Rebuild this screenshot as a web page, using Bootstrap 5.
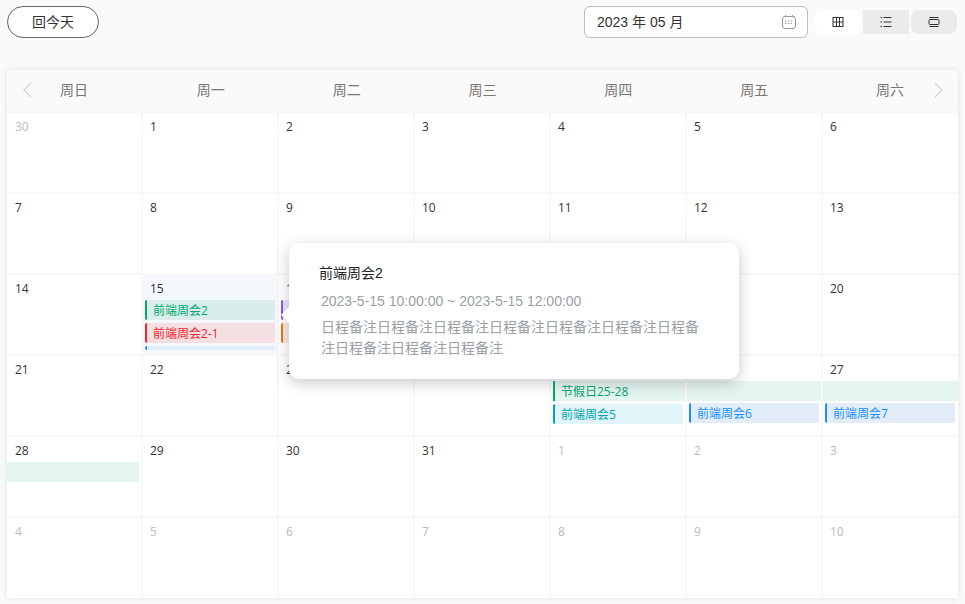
<!DOCTYPE html>
<html lang="zh">

<head>
    <meta charset="UTF-8">
    <title>日程</title>
    <link href="https://cdn.jsdelivr.net/npm/bootstrap@5.3.0/dist/css/bootstrap.min.css" rel="stylesheet" />
    <script src="https://cdn.jsdelivr.net/npm/bootstrap@5.3.0/dist/js/bootstrap.bundle.min.js"></script>
    <style>
        html, body { height: 604px; overflow: hidden; }
        body { background: #fafafa; font-family: "Liberation Sans", "Noto Sans CJK SC", sans-serif; font-size: 14px; color: #333; }
        .page-wrap { padding: 6px 7px 0; position: relative; }
        .tool-row { height: 32px; margin-bottom: 32px; }
        .today-btn { width: 92px; height: 32px; border: 1px solid #666; border-radius: 16px; background: #fff; color: #333; font-size: 14px; line-height: 1; padding: 0; }
        .month-box { width: 224px; height: 32px; margin-right: 7px; padding: 0 11px 0 12px; background: #fff; border: 1px solid #bbb; border-radius: 6px; font-size: 14px; color: #333; }
        .view-btns { gap: 2px; margin-top: 4px; margin-right: 1px; }
        .view-btn { width: 46px; height: 24px; background: #ebebeb; color: #333; }
        .view-btn.on { background: #fff; border-radius: 8px; }
        .view-btn.end { border-radius: 8px; }
        .cal-box { width: 951px; height: 528px; background: #fff; box-shadow: 0 0 6px rgba(0,0,0,.1); display: flex; flex-direction: column; }
        .week-head { height: 41px; flex: none; background: #fafafa; position: relative; color: #777; }
        .week-name { width: 136px; text-align: center; padding-top: 12px; line-height: 17px; }
        .week-name.first { padding-right: 2px; }
        .nav-arrow { position: absolute; top: 11px; }
        .week-row { height: 81px; flex: none; border-top: 2px solid #f7f7f7; }
        .week-row.last { height: auto; flex: 1; }
        .day-cell { width: 136px; border-right: 2px solid #f8f8f8; padding: 0 2px; position: relative; }
        .day-cell.end { width: 135px; border-right: 0; padding-right: 3px; }
        .day-cell.picked { background: #f4f8fc; }
        .day-num { display: block; padding: 5px 0 0 5px; height: 25px; line-height: 17px; font-size: 12px; color: #333; font-family: "Open Sans", "Noto Sans CJK SC", sans-serif; }
        .day-cell.first .day-num { padding-left: 6px; }
        .day-cell.other .day-num { color: #bbb; }
        .ev-bar { height: 20px; margin-bottom: 3px; padding-left: 6px; border-left: 2px solid; border-radius: 2px; font-family: "Open Sans", "Noto Sans CJK SC", sans-serif; font-size: 12px; line-height: 22px; white-space: nowrap; overflow: hidden; }
        .ev-green { color: #00a870; border-color: #00a870; background: #d9eeea; }
        .ev-red { color: #f5222d; border-color: #f5222d; background: #f5dfe3; }
        .ev-blue { color: #1890ff; border-color: #1890ff; background: #e3edfa; }
        .ev-cyan { color: #00a3b4; border-color: #00a3b4; background: #e1f4f8; }
        .ev-purple { border-color: #7a5cf5; background: #e7e3fa; color: #7a5cf5; }
        .ev-orange { border-color: #f5700a; background: #f8e8dc; color: #f5700a; }
        .ev-cut { height: 4px; margin-bottom: 0; }
        .holiday-head { color: #00a870; border-color: #00a870; background: #e4f4ee; border-radius: 0; margin-right: -2px; }
        .holiday-tail { border: 0; border-radius: 0; background: #e4f4ee; margin-left: -2px; margin-right: -2px; margin-bottom: 2px; }
        .day-cell.end .holiday-tail { margin-right: -3px; }
        .day-cell.first .holiday-tail { margin-right: 0; }
        .info-pop { position: absolute; left: 289px; top: 243px; width: 450px; height: 136px; background: #fff; border-radius: 10px; box-shadow: 0 4px 14px rgba(60,60,90,.28); padding: 22px 30px 0 31px; z-index: 5; }
        .info-pop::before { content: ""; position: absolute; left: -8px; top: 64px; border: 8px solid transparent; border-left: 0; border-right-color: #fff; }
        .info-title { font-size: 14px; color: #222; line-height: 17px; margin-left: -1px; }
        .info-time { font-size: 14px; color: #9a9fa6; line-height: 17px; margin-top: 11px; margin-left: 1px; }
        .info-note { font-size: 14px; color: #9a9fa6; line-height: 21px; margin-top: 7px; margin-left: 1px; width: 390px; }
    </style>
</head>

<body>

    <div class="page-wrap">
        <div class="tool-row d-flex align-items-start justify-content-between">
            <button type="button" class="today-btn">回今天</button>
            <div class="d-flex align-items-start">
                <div class="month-box d-flex align-items-center justify-content-between">
                    <span>2023 年 05 月</span>
                    <svg width="14" height="14" viewBox="0 0 14 14" fill="none" stroke="#999" stroke-width="1">
                        <rect x="0.5" y="1.5" width="13" height="12" rx="2.5" />
                        <path d="M3.5 0v3M10.5 0v3M3 6h8M3 8.5h8" stroke-dasharray="1.4 1.4" />
                    </svg>
                </div>
                <div class="view-btns d-flex">
                    <div class="view-btn on d-flex align-items-center justify-content-center">
                        <svg width="12" height="12" viewBox="0 0 12 12" fill="none" stroke="#333"><rect x="1" y="1.5" width="10" height="9" /><path d="M4.5 1.5v9M7.5 1.5v9M1 6h10" /></svg>
                    </div>
                    <div class="view-btn d-flex align-items-center justify-content-center">
                        <svg width="12" height="12" viewBox="0 0 12 12" fill="none" stroke="#333"><path d="M.5 1.5h1.5M3.5 1.5H11.5M.5 6h1.5M3.5 6H11.5M.5 10.5h1.5M3.5 10.5H11.5" /></svg>
                    </div>
                    <div class="view-btn end d-flex align-items-center justify-content-center">
                        <svg width="12" height="12" viewBox="0 0 12 12" fill="none" stroke="#333"><path d="M1.5 1.5h9M1.5 10.5h9" /><rect x="1" y="3.5" width="10" height="5" rx="1" /></svg>
                    </div>
                </div>
            </div>
        </div>

        <div class="cal-box">
            <div class="week-head d-flex">
                <svg class="nav-arrow" style="left:15px" width="10" height="18" viewBox="0 0 10 18" fill="none" stroke="#d4d4d4" stroke-width="1.4"><path d="M9 2 2 9l7 7" /></svg>
                <div class="week-name first">周日</div>
                <div class="week-name">周一</div>
                <div class="week-name">周二</div>
                <div class="week-name">周三</div>
                <div class="week-name">周四</div>
                <div class="week-name">周五</div>
                <div class="week-name">周六</div>
                <svg class="nav-arrow" style="right:14px" width="10" height="18" viewBox="0 0 10 18" fill="none" stroke="#d4d4d4" stroke-width="1.4"><path d="m1 2 7 7-7 7" /></svg>
            </div>
            <div id="weekRows" class="d-flex flex-column flex-grow-1"></div>
        </div>
    </div>

    <div class="info-pop">
        <div class="info-title">前端周会2</div>
        <div class="info-time">2023-5-15 10:00:00 ~ 2023-5-15 12:00:00</div>
        <div class="info-note">日程备注日程备注日程备注日程备注日程备注日程备注日程备注日程备注日程备注日程备注</div>
    </div>

    <script>
        const semanas = [
            [[30, 1], [1], [2], [3], [4], [5], [6]],
            [[7], [8], [9], [10], [11], [12], [13]],
            [[14], [15], [16], [17], [18], [19], [20]],
            [[21], [22], [23], [24], [25], [26], [27]],
            [[28], [29], [30], [31], [1, 1], [2, 1], [3, 1]],
            [[4, 1], [5, 1], [6, 1], [7, 1], [8, 1], [9, 1], [10, 1]]
        ];
        const eventos = {
            '2-1': '<div class="ev-bar ev-green">前端周会2</div><div class="ev-bar ev-red">前端周会2-1</div><div class="ev-bar ev-blue ev-cut"></div>',
            '2-2': '<div class="ev-bar ev-purple"></div><div class="ev-bar ev-orange"></div>',
            '3-4': '<div class="ev-bar holiday-head">节假日25-28</div><div class="ev-bar ev-cyan">前端周会5</div>',
            '3-5': '<div class="ev-bar holiday-tail">&nbsp;</div><div class="ev-bar ev-blue">前端周会6</div>',
            '3-6': '<div class="ev-bar holiday-tail">&nbsp;</div><div class="ev-bar ev-blue">前端周会7</div>',
            '4-0': '<div class="ev-bar holiday-tail">&nbsp;</div>'
        };
        document.getElementById('weekRows').innerHTML = semanas.map((semana, i) => {
            const celdas = semana.map((d, j) => {
                let cls = 'day-cell';
                if (j === 0) cls += ' first';
                if (j === 6) cls += ' end';
                if (d[1]) cls += ' other';
                if (i === 2 && j === 1) cls += ' picked';
                return `<div class="${cls}"><span class="day-num">${d[0]}</span>${eventos[i + '-' + j] || ''}</div>`;
            }).join('');
            return `<div class="week-row d-flex${i === 5 ? ' last' : ''}">${celdas}</div>`;
        }).join('');
    </script>

</body>

</html>
